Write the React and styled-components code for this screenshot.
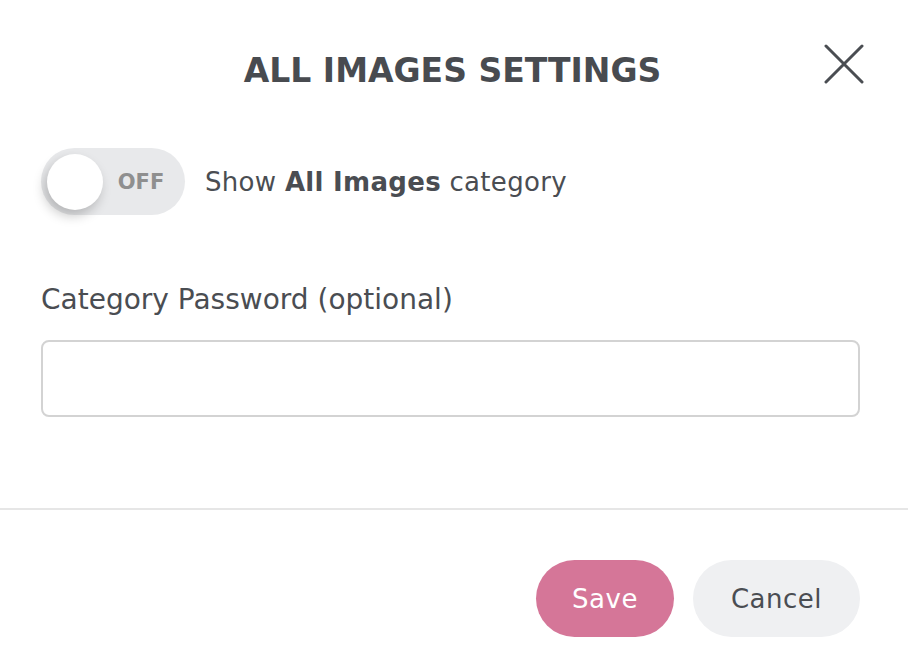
import React, { useState } from 'react';
import styled, { createGlobalStyle } from 'styled-components';

const GlobalStyle = createGlobalStyle`
  body {
    margin: 0;
    background: #ffffff;
    font-family: "DejaVu Sans", "Noto Sans", sans-serif;
    color: #4a4d52;
  }
`;

const Modal = styled.div`
  width: 908px;
  height: 666px;
  background: #ffffff;
  display: flex;
  flex-direction: column;
`;

const Header = styled.header`
  height: 140px;
  display: grid;
  grid-template-columns: 1fr auto 1fr;
  align-items: center;
  padding: 0 44px 0 41px;
`;

const Title = styled.h1`
  grid-column: 2;
  margin: 0;
  font-size: 33px;
  font-weight: 700;
  color: #484b50;
`;

const CloseButton = styled.button`
  grid-column: 3;
  justify-self: end;
  width: 40px;
  height: 40px;
  margin-bottom: 13px;
  padding: 0;
  border: none;
  background: none;
  cursor: pointer;
  color: #4a4d52;
  display: flex;
`;

const Body = styled.div`
  flex: 1;
  padding: 8px 48px 0 41px;
`;

const ToggleRow = styled.label`
  display: flex;
  align-items: center;
  gap: 20px;
  font-size: 26px;
  letter-spacing: 0.3px;
  cursor: pointer;
`;

const Track = styled.span`
  width: 144px;
  height: 67px;
  box-sizing: border-box;
  border-radius: 34px;
  background: ${p => (p.$on ? '#d4769a' : '#e8e9eb')};
  display: flex;
  align-items: center;
  padding: 0 6px;
  flex-direction: ${p => (p.$on ? 'row-reverse' : 'row')};
`;

const Knob = styled.span`
  width: 56px;
  height: 56px;
  border-radius: 50%;
  background: #ffffff;
  box-shadow: -3px 6px 12px rgba(0, 0, 0, 0.22);
`;

const TrackText = styled.span`
  flex: 1;
  text-align: center;
  font-size: 21px;
  font-weight: 700;
  letter-spacing: 0;
  color: ${p => (p.$on ? '#ffffff' : '#8f8f8f')};
`;

const Field = styled.div`
  margin-top: 68px;
  display: flex;
  flex-direction: column;
  gap: 24px;
`;

const Label = styled.span`
  font-size: 28px;
  font-weight: 500;
  color: #4a4d52;
`;

const Input = styled.input`
  height: 77px;
  box-sizing: border-box;
  border: 2px solid #d3d3d3;
  border-radius: 8px;
  padding: 0 16px;
  font-size: 24px;
  font-family: inherit;
  outline: none;
`;

const Footer = styled.footer`
  border-top: 2px solid #e6e6e6;
  height: 158px;
  box-sizing: border-box;
  display: flex;
  justify-content: flex-end;
  align-items: flex-start;
  gap: 19px;
  padding: 50px 48px 0 0;
`;

const Button = styled.button`
  height: 77px;
  padding: 0 ${p => (p.$primary ? '36px' : '38px')};
  border: none;
  border-radius: 39px;
  font-family: inherit;
  font-size: 26px;
  letter-spacing: 0.5px;
  cursor: pointer;
  background: ${p => (p.$primary ? '#d57698' : '#eff0f2')};
  color: ${p => (p.$primary ? '#ffffff' : '#4a4d52')};
`;

export default function App() {
  const [on, setOn] = useState(false);
  return (
    <>
      <GlobalStyle />
      <Modal>
        <Header>
          <Title>ALL IMAGES SETTINGS</Title>
          <CloseButton aria-label="Close">
            <svg width="40" height="40" viewBox="0 0 40 40" fill="none" stroke="currentColor" strokeWidth="3" strokeLinecap="round">
              <path d="M2 2 L38 38 M38 2 L2 38" />
            </svg>
          </CloseButton>
        </Header>
        <Body>
          <ToggleRow onClick={() => setOn(!on)}>
            <Track $on={on}>
              <Knob />
              <TrackText $on={on}>{on ? 'ON' : 'OFF'}</TrackText>
            </Track>
            <span>
              Show <b>All Images</b> category
            </span>
          </ToggleRow>
          <Field>
            <Label>Category Password (optional)</Label>
            <Input type="password" />
          </Field>
        </Body>
        <Footer>
          <Button $primary>Save</Button>
          <Button>Cancel</Button>
        </Footer>
      </Modal>
    </>
  );
}
